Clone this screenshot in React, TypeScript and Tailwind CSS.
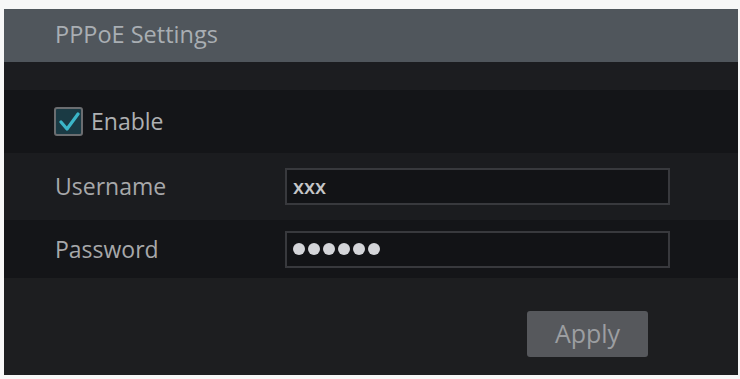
import React from "react";

export default function App() {
  return (
    <div className="w-[740px] h-[379px] bg-[#f7f7f7] pt-[9px] pl-[4px]" style={{ fontFamily: '"Open Sans", "Liberation Sans", sans-serif' }}>
      <div className="w-[734px] h-[366px] flex flex-col bg-[#1d1e20]">
        <div className="h-[53px] bg-[#50565c] flex items-center pl-[51px] pb-[2px] text-[23.5px] text-[#a9aeb3]">
          PPPoE Settings
        </div>
        <div className="h-[28px] bg-[#1c1d20]" />
        <div className="h-[63px] bg-[#141518] flex items-center pl-[50px]">
          <div className="w-[29px] h-[29px] border-2 border-[#6b6d70] rounded-[3px] bg-[#1a3a44] flex items-center justify-center">
            <svg width="22" height="22" viewBox="0 0 22 22">
              <path d="M3 11 L9 18 L20 3" fill="none" stroke="#3bb6c8" strokeWidth="3.2" strokeLinecap="round" strokeLinejoin="round" />
            </svg>
          </div>
          <span className="ml-[8px] text-[23px] text-[#aeb0b2]">Enable</span>
        </div>
        <div className="h-[67px] bg-[#1b1c1f] flex items-center pl-[51px]">
          <span className="w-[230px] text-[23px] text-[#a7a8aa]">Username</span>
          <div className="w-[385px] h-[37px] border-2 border-[#38393d] bg-[#121316] flex items-center pl-[6px] text-[20px] text-[#c5c6c8] font-semibold">
            xxx
          </div>
        </div>
        <div className="h-[58px] bg-[#141518] flex items-center pl-[51px]">
          <span className="w-[230px] text-[23px] text-[#a7a8aa]">Password</span>
          <div className="w-[385px] h-[37px] border-2 border-[#38393d] bg-[#121316] flex items-center pl-[6px] gap-[3px]">
            {[0, 1, 2, 3, 4, 5].map((i) => (
              <span key={i} className="w-[12px] h-[12px] rounded-full bg-[#d4d5d9]" />
            ))}
          </div>
        </div>
        <div className="flex-1 flex items-start justify-end pr-[90px] pt-[33px]">
          <div className="w-[121px] h-[46px] bg-[#56585c] rounded-[3px] flex items-center justify-center text-[25px] text-[#9c9ea1]">
            Apply
          </div>
        </div>
      </div>
    </div>
  );
}
